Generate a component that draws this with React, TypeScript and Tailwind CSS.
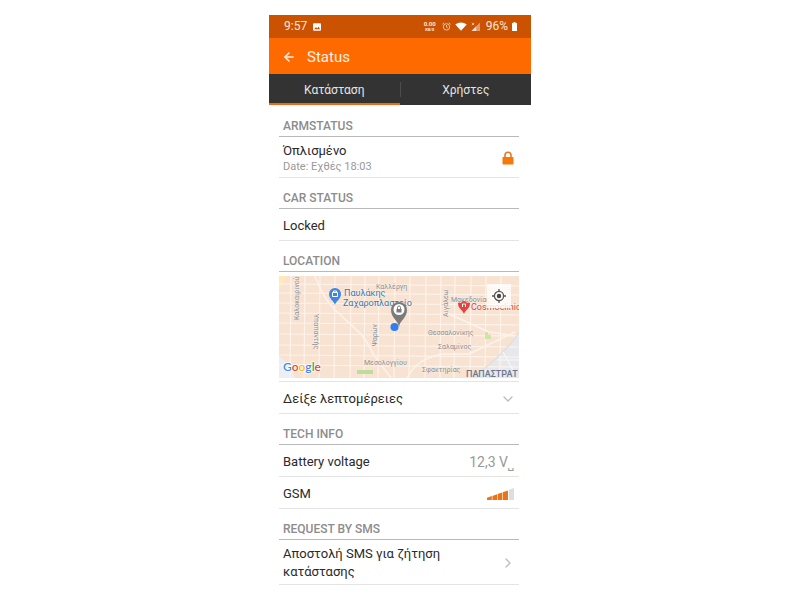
import { ArrowLeft, ChevronDown, ChevronRight } from 'lucide-react';
import type { ReactNode } from 'react';

function StatusBar() {
  return (
    <div className="flex items-center justify-between bg-[#cb5200] pl-[15px] pr-3.5 text-[12px] leading-[23px] text-[#fbe6d8]">
      <div className="flex items-center gap-1.5">
        <span>9:57</span>
        <svg viewBox="0 0 8 8" className="size-2">
          <rect width="8" height="7.5" y="0.3" rx="1" fill="#fff" />
          <path d="M1.2 6.3 3 4l1.2 1.4L5.6 3.6 7 6.3z" fill="#cb5200" />
        </svg>
      </div>
      <div className="flex items-center gap-1">
        <div className="mr-0.5 flex flex-col items-center text-[6px] font-bold leading-[6px]">
          <span>0.00</span>
          <span className="text-[4px] leading-[5px]">KB/S</span>
        </div>
        {/* Alarm */}
        <svg viewBox="0 0 9 9" className="size-[9px]" fill="none" stroke="#f6cdb2" strokeWidth="0.9">
          <circle cx="4.5" cy="4.9" r="3.2" />
          <path d="M4.5 3v2.1l1.3.8M.5 2.2 2.2.8M8.5 2.2 6.8.8" />
        </svg>
        {/* Wifi */}
        <svg viewBox="0 0 12 9" className="h-[9px] w-3" fill="#fff">
          <path d="M.3 2.6C3.5-.2 8.5-.2 11.7 2.6L6 8.8z" />
        </svg>
        {/* Mobile signal */}
        <svg viewBox="0 0 9 9" className="size-[9px]">
          <path d="M9 .5V9H.5z" fill="#e3986a" />
          <path d="M5.2 4.3V9H.5z" fill="#f8dcc9" />
          <path d="m.8.8 2.4 2.4M3.2.8.8 3.2" stroke="#f8dcc9" strokeWidth="0.8" />
        </svg>
        <span className="ml-0.5">96%</span>
        {/* Battery */}
        <svg viewBox="0 0 5 9" className="h-[9px] w-[5px]" fill="#fff">
          <path d="M1.5 0h2v1H5v8H0V1h1.5z" />
        </svg>
      </div>
    </div>
  );
}

function SectionHeader({ children }: { children: ReactNode }) {
  return (
    <h2 className="border-b border-[#b9b9b9] pb-0.5 pl-1 pr-[5px] pt-3 text-[12px] font-medium leading-4 text-[#8c8c8c]">
      {children}
    </h2>
  );
}

const rowClass =
  'flex min-h-8 w-full items-center justify-between border-b border-[#e4e4e4] pb-[3px] pl-1 pr-[5px] pt-[5px] text-left text-[13px] leading-[18px] text-[#2a2a2a]';

function LockIcon() {
  return (
    <svg viewBox="0 0 12 14" className="h-3.5 w-3">
      <path d="M3 7V4.2a3 3 0 0 1 6 0V7" fill="none" stroke="#dc7c26" strokeWidth="1.6" />
      <rect x="0.5" y="6" width="11" height="7.6" rx="0.8" fill="#f57808" />
    </svg>
  );
}

function SignalBars() {
  return (
    <svg viewBox="0 0 27 12" className="h-3 w-[27px]">
      <path d="M0 12V9.8L4.8 8v4zM5.4 12V7.9l4.6-1.6V12zM10.600 12V6.100l4.600-1.600V12zM15.800 12V4.300l5.200-1.800V12z" fill="#ea7519" />
      <path d="M22 12V1.8L27 0v12z" fill="#dedede" />
    </svg>
  );
}

const streetsH = [8, 17, 27, 37, 47, 58, 69, 79, 89];
const streetsV = [12, 26, 41, 56, 72, 86, 100, 116, 131, 147, 162, 176, 192, 207, 222];

function StreetMap() {
  return (
    <svg viewBox="0 0 240 102" className="block w-full" role="img" aria-label="Map">
      <rect width="240" height="102" fill="#f8e2d1" />
      <path d="M240 58q-14 20-44 44h44z" fill="#e6e8ec" />
      <path d="M0 0h8L0 14z" fill="#fdeab8" />
      <path d="M0 80q12 8 16 22H0z" fill="#eceef0" />
      <g stroke="#fdf3ea" strokeWidth="1.2" fill="none">
        {streetsH.map((y) => (
          <path key={y} d={`M0 ${y}L240 ${y + 2}`} />
        ))}
        {streetsV.map((x) => (
          <path key={x} d={`M${x} 0L${x - 1} 102`} />
        ))}
        <path d="M36 0q8 22 20 34l26 24q8 10 12 20l18 24M128 102q10-20 36-24h26l46-22M166 36l44 20 28 4" strokeWidth="1.5" />
        <path d="M240 57q-14 20-46 45" stroke="#dde0e6" strokeWidth="1.5" />
        <path d="M218 84h22M224 76l10 18" stroke="#f6f7f9" />
      </g>
      <rect x="78" y="94" width="16" height="4" fill="#bfdc9c" />
      <path d="M206 56h3v3h3v4h-6z" fill="#cfe4ab" />

      <g fontSize="7" fill="#8b8f96" stroke="#fbeee2" strokeWidth="1" paintOrder="stroke">
        <text x="97" y="13">Καλλέργη</text>
        <text x="172" y="26">Μακεδονίας</text>
        <text x="149" y="59">Θεσσαλονίκης</text>
        <text x="159" y="73">Σαλαμίνος</text>
        <text x="85" y="89">Μεσολογγίου</text>
        <text x="143" y="96">Σφακτηρίας</text>
        <text transform="translate(20 44) rotate(-90)">Καλοκαιρινού</text>
        <text transform="translate(35 38) rotate(90)">Υπαπαντής</text>
        <text transform="translate(98 70) rotate(-90)">Ψαρών</text>
        <text transform="translate(169 41) rotate(-90)">Αιγάλεω</text>
      </g>
      <text x="187" y="101" fontSize="9" fontWeight="500" fill="#6b7690">
        ΠΑΠΑΣΤΡΑΤ
      </text>

      {/* Bakery */}
      <path d="M56 29c-1-4-6-6-6-11a6 6 0 0 1 12 0c0 5-5 7-6 11z" fill="#3f86e0" />
      <path d="M53.500 16.500h5v4h-5zM54.500 16.500v-1.500h3v1.500" fill="none" stroke="#fff" />
      <g fontSize="9" fill="#2f7bc0" stroke="#fbeee2" strokeWidth="1" paintOrder="stroke">
        <text x="65" y="20">Παυλάκης</text>
        <text x="64" y="30">Ζαχαροπλαστείο</text>
      </g>

      {/* Clinic */}
      <path d="M185 38c-1-4-6-5-6-11q1.500-1 3 0 1-2 3-2t3 2q1.500-1 3 0c0 6-5 7-6 11z" fill="#e0443e" />
      <path d="M183.500 31v-3h3v3" fill="none" stroke="#fff" />
      <text x="192" y="34" fontSize="9" fill="#d04a46" stroke="#fbeee2" strokeWidth="1" paintOrder="stroke">
        Cosmoclinic
      </text>

      {/* Car position */}
      <path d="M120 51c-1-7-8-9-8-17a8 8 0 0 1 16 0c0 8-7 10-8 17z" fill="#7b7b7b" />
      <circle cx="120" cy="33.500" r="5.500" fill="#fff" />
      <rect x="117.500" y="33" width="5" height="3.500" fill="#7b7b7b" />
      <path d="M118.500 33v-1.500a1.500 1.500 0 0 1 3 0V33" fill="none" stroke="#7b7b7b" />
      <circle cx="115.500" cy="51" r="4" fill="#2f7df0" />

      <text
        x="4"
        y="95"
        fontFamily="Lato, sans-serif"
        fontSize="12"
        fontWeight="600"
        stroke="#fff"
        strokeWidth="1.500"
        paintOrder="stroke"
      >
        <tspan fill="#4285f4">G</tspan>
        <tspan fill="#ea4335">o</tspan>
        <tspan fill="#fbbc05">o</tspan>
        <tspan fill="#4285f4">g</tspan>
        <tspan fill="#34a853">l</tspan>
        <tspan fill="#ea4335">e</tspan>
      </text>
    </svg>
  );
}

export default function App() {
  return (
    <div className="flex min-h-screen justify-center bg-white pt-[15px] font-[Roboto,sans-serif]">
      <div className="w-full max-w-[262px]">
        <StatusBar />

        <header className="flex items-center gap-2.5 bg-[#ff6a00] px-3 pb-[5px] pt-[7px] text-[#fff0e4]">
          <button aria-label="Back" className="flex size-4 items-center justify-center">
            <ArrowLeft size={14} strokeWidth={2.5} />
          </button>
          <h1 className="text-[15px] leading-6">Status</h1>
        </header>

        <nav className="flex bg-[#333] text-[12px] leading-[26px] text-[#e4e4e4]">
          <button className="flex-1 border-b-2 border-[#f06a10] pt-[3px]">Κατάσταση</button>
          <span className="my-2 w-px bg-[#4c4c4c]" />
          <button className="flex-1 border-b-2 border-[#333] pt-[3px]">Χρήστες</button>
        </nav>

        <main className="pl-2.5 pr-3 pt-px">
          <SectionHeader>ARMSTATUS</SectionHeader>
          <div className={rowClass}>
            <div>
              <p>Όπλισμένο</p>
              <p className="text-[11px] leading-[14px] text-[#999]">Date: Εχθές 18:03</p>
            </div>
            <LockIcon />
          </div>

          <SectionHeader>CAR STATUS</SectionHeader>
          <div className={rowClass}>Locked</div>

          <SectionHeader>LOCATION</SectionHeader>
          <div className="relative border-b border-[#e4e4e4] pb-[3px] pt-1">
            <StreetMap />
            <button
              aria-label="My location"
              className="absolute right-2 top-3 flex size-6 items-center justify-center bg-white/80"
            >
              <svg viewBox="0 0 14 14" className="size-3.5" fill="none" stroke="#555" strokeWidth="1.3">
                <circle cx="7" cy="7" r="4.600" />
                <circle cx="7" cy="7" r="2.200" fill="#444" stroke="none" />
                <path d="M7 0v2.400M7 11.600V14M0 7h2.400M11.600 7H14" />
              </svg>
            </button>
          </div>
          <button className={rowClass}>
            Δείξε λεπτομέρειες
            <ChevronDown size={16} color="#bdbdbd" strokeWidth={2} className="-mr-0.5" />
          </button>

          <SectionHeader>TECH INFO</SectionHeader>
          <div className={rowClass}>
            <span>Battery voltage</span>
            <span className="text-[14px] text-[#999]">12,3 V⎵</span>
          </div>
          <div className={rowClass}>
            <span>GSM</span>
            <SignalBars />
          </div>

          <SectionHeader>REQUEST BY SMS</SectionHeader>
          <button className={rowClass}>
            <span className="max-w-[180px]">Αποστολή SMS για ζήτηση κατάστασης</span>
            <ChevronRight size={16} color="#bdbdbd" strokeWidth={2} className="-mr-0.5" />
          </button>
        </main>
      </div>
    </div>
  );
}
